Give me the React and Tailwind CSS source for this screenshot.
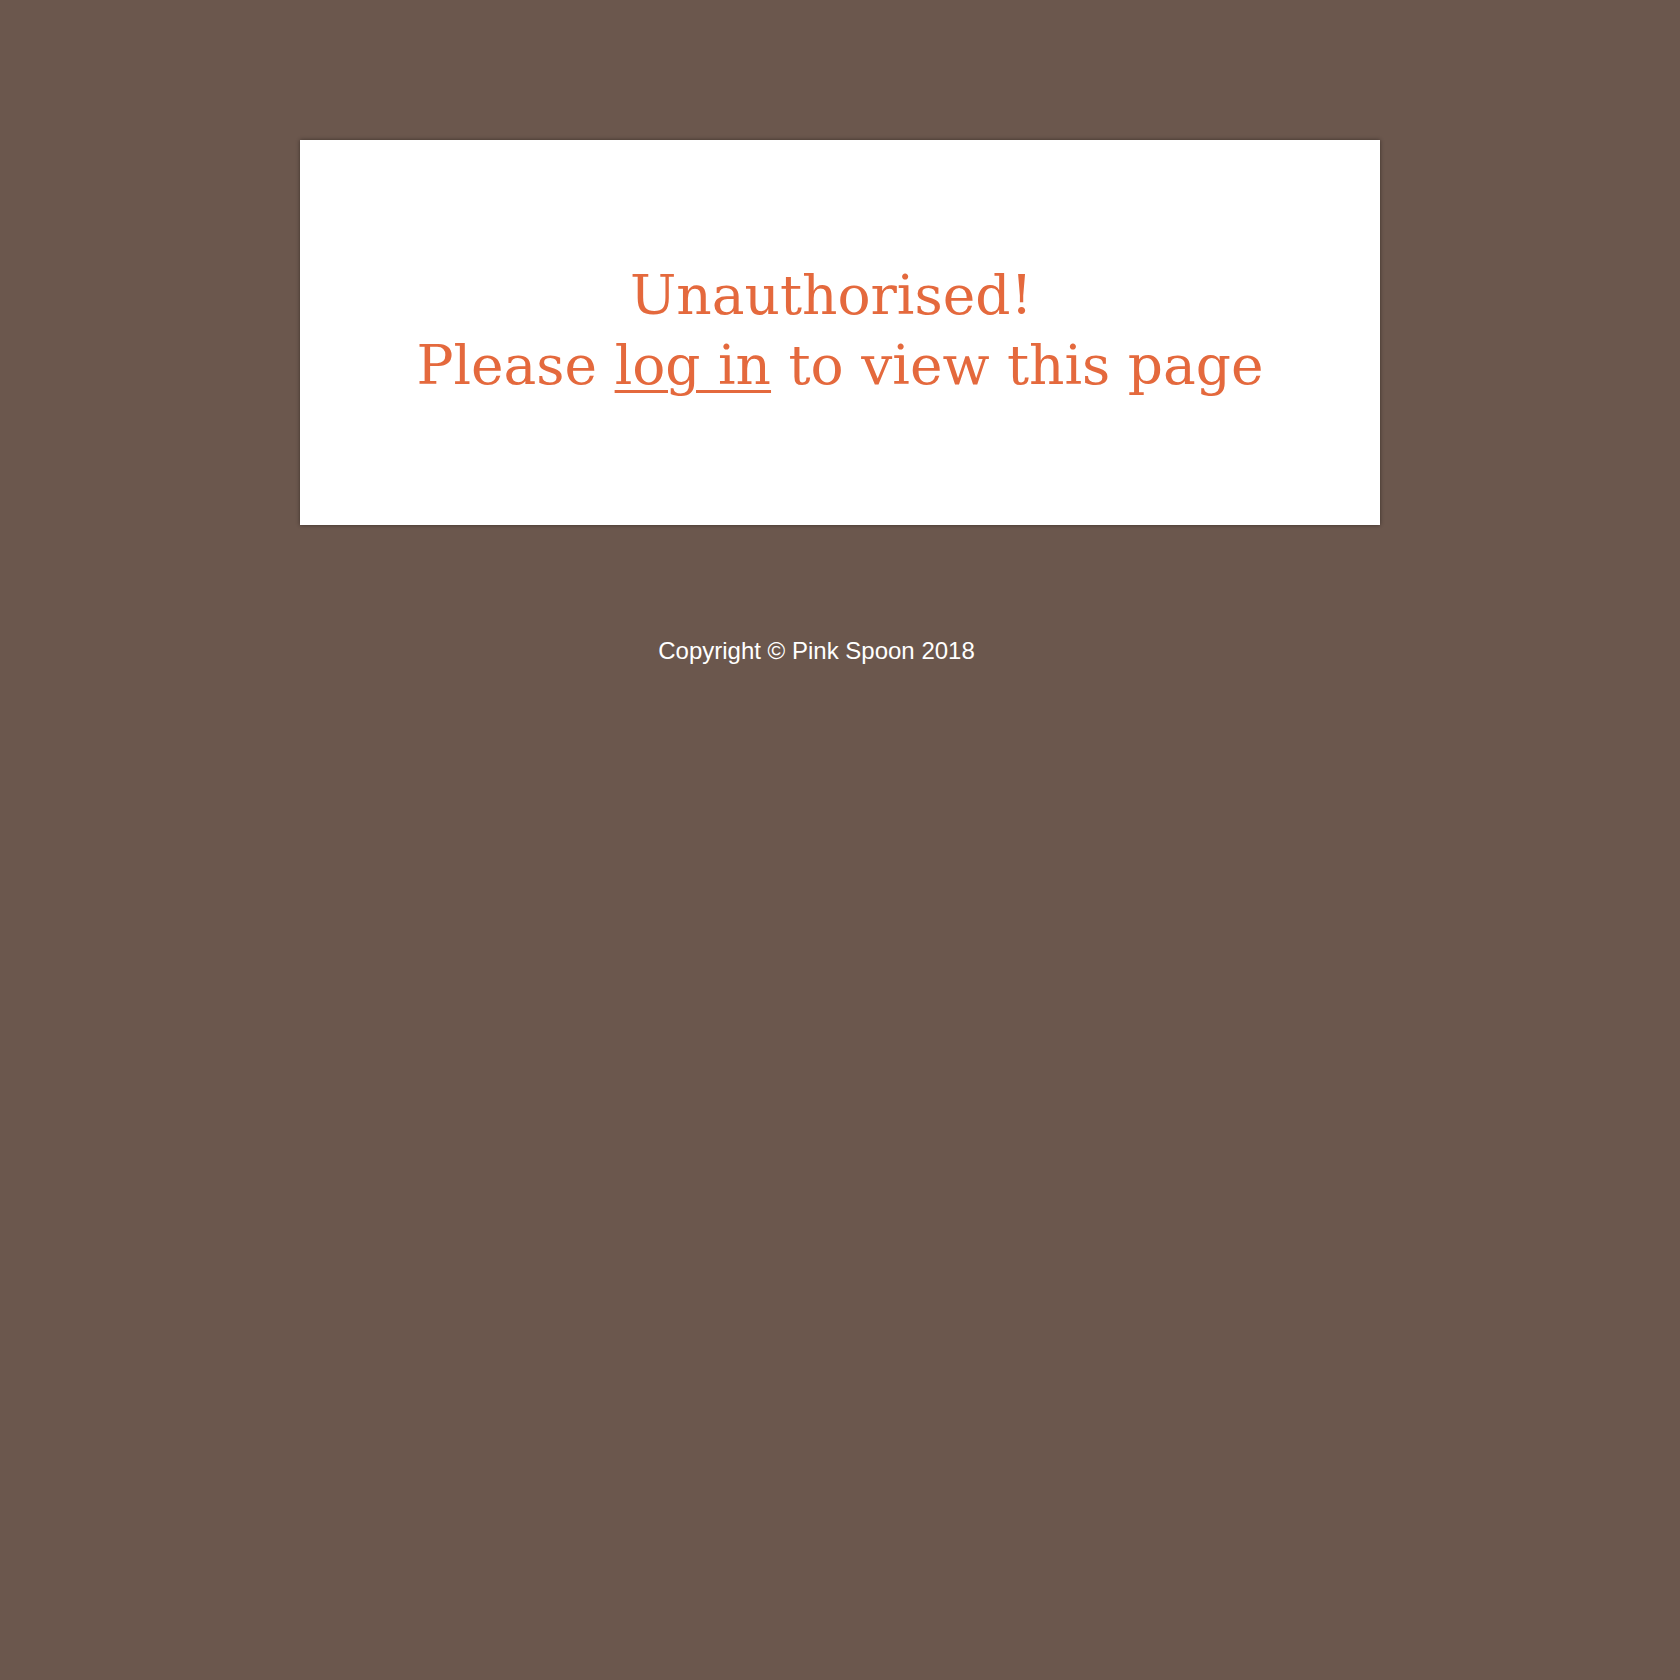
export default function App() {
  return (
    <div className="min-h-[1680px] bg-[#6b574d] pt-[140px]">
      {/* Message card */}
      <div className="mx-auto flex h-[385px] w-[1080px] items-center justify-center bg-white shadow-[0_0_4px_rgba(0,0,0,0.45)]">
        <p
          className="pb-[6px] text-center text-[55px] leading-[70px] text-[#e4693d]"
          style={{ fontFamily: '"DejaVu Serif", serif' }}
        >
          Unauthorised!{"\u00a0"}
          <br />
          Please{" "}
          <a href="#" className="underline decoration-[3px] underline-offset-[6px]">
            log in
          </a>{" "}
          to view this page
        </p>
      </div>

      <footer
        className="mt-[112px] pr-[47px] text-center text-[24px] leading-[28px] text-white"
        style={{ fontFamily: '"Liberation Sans", Arial, sans-serif' }}
      >
        Copyright © Pink Spoon 2018
      </footer>
    </div>
  );
}
